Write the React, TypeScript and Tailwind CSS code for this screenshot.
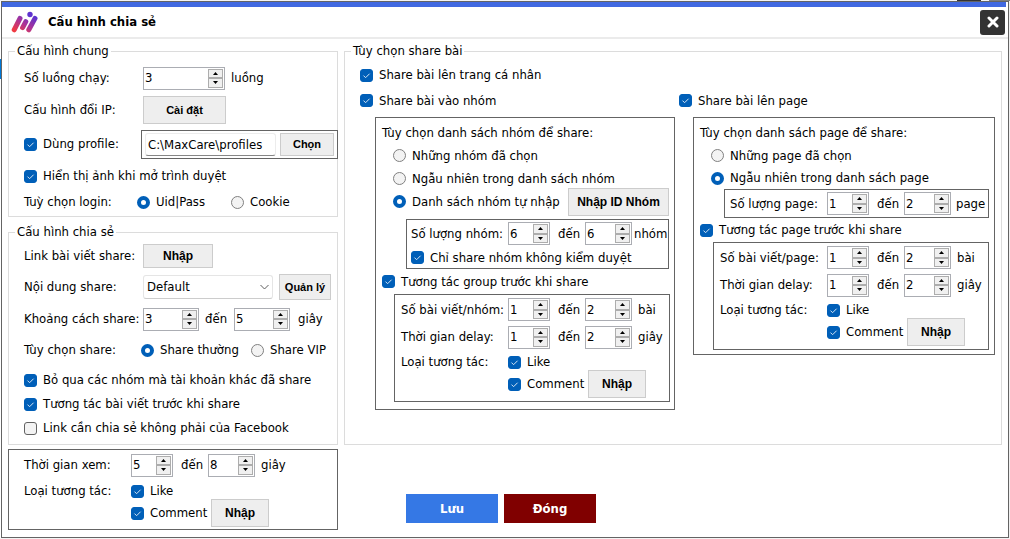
import { useState, type ReactNode } from "react";

function Logo() {
  return (
    <svg className="h-[22px] w-[27px] shrink-0" viewBox="0 0 27 22" aria-hidden="true">
      <defs>
        <linearGradient id="logo-fill" gradientUnits="userSpaceOnUse" x1="6" y1="21" x2="18" y2="2">
          <stop offset="0" stopColor="#f03a42" />
          <stop offset="0.5" stopColor="#a8349a" />
          <stop offset="1" stopColor="#5b33d0" />
        </linearGradient>
      </defs>
      <g stroke="url(#logo-fill)" strokeWidth="5" strokeLinecap="round" fill="none">
        <path d="M3.2 18.8 L9 7.4" />
        <path d="M11.6 16.6 L14.8 10.6" />
        <path d="M17.8 18.8 L24 7.4" />
      </g>
      <circle cx="19" cy="3.5" r="2.7" fill="#5f33cf" />
    </svg>
  );
}

function Check({ label, defaultChecked = true }: { label: string; defaultChecked?: boolean }) {
  return (
    <label className="flex items-center gap-1.5 whitespace-nowrap">
      <span className="grid size-[13px] shrink-0 place-items-center">
        <input
          type="checkbox"
          defaultChecked={defaultChecked}
          className="peer col-start-1 row-start-1 size-[13px] appearance-none rounded-[3px] border border-[#626262] bg-[#f3f3f3] checked:border-[#005fb8] checked:bg-[#005fb8]"
        />
        <svg
          viewBox="0 0 13 13"
          className="pointer-events-none invisible col-start-1 row-start-1 size-[13px] peer-checked:visible"
          aria-hidden="true"
        >
          <path d="M3.5 6.6 L5.6 8.7 L9.6 4.7" fill="none" stroke="#d5e5f4" strokeWidth="1" />
        </svg>
      </span>
      <span>{label}</span>
    </label>
  );
}

function Radio({ name, label, defaultChecked = false }: { name: string; label: string; defaultChecked?: boolean }) {
  return (
    <label className="flex items-center gap-1.5 whitespace-nowrap">
      <input
        type="radio"
        name={name}
        defaultChecked={defaultChecked}
        className="size-[13px] shrink-0 appearance-none rounded-full border border-[#808080] bg-[#f3f3f3] checked:border-4 checked:border-[#005fb8] checked:bg-white"
      />
      <span>{label}</span>
    </label>
  );
}

function Spin({ id, label, value, width }: { id: string; label?: string; value: number; width: string }) {
  const [current, setCurrent] = useState(value);
  const arrow =
    "flex flex-1 items-center justify-center border border-[#adadad] bg-[#f0f0f0] p-0";
  return (
    <span className={`flex h-[23px] shrink-0 border border-[#abadb3] bg-white p-px ${width}`}>
      <input
        id={id}
        type="number"
        aria-label={label}
        value={current}
        onChange={(e) => setCurrent(Number(e.target.value))}
        className="h-[18px] min-w-0 flex-1 appearance-none bg-transparent outline-none [appearance:textfield] [&::-webkit-inner-spin-button]:appearance-none"
      />
      <span className="flex w-[15px] shrink-0 flex-col">
        <button type="button" aria-label="+" className={arrow} onClick={() => setCurrent(current + 1)}>
          <svg viewBox="0 0 5 3" className="h-[3px] w-[5px]" aria-hidden="true">
            <path d="M0 3 L2.5 0 L5 3 Z" />
          </svg>
        </button>
        <button type="button" aria-label="-" className={arrow} onClick={() => setCurrent(current - 1)}>
          <svg viewBox="0 0 5 3" className="h-[3px] w-[5px]" aria-hidden="true">
            <path d="M0 0 L2.5 3 L5 0 Z" />
          </svg>
        </button>
      </span>
    </span>
  );
}

function Button({ children, size, text = "text-[12px]" }: { children: ReactNode; size: string; text?: string }) {
  return (
    <button
      type="button"
      className={`shrink-0 whitespace-nowrap border border-[#cccccc] bg-[#eeeeee] font-['Liberation_Sans',sans-serif] font-bold ${text} ${size}`}
    >
      {children}
    </button>
  );
}

function Range({
  id,
  label,
  labelWidth,
  from,
  to,
  unit,
  unitGap = "pl-1.5",
}: {
  id: string;
  label: string;
  labelWidth: string;
  from: number;
  to: number;
  unit: string;
  unitGap?: string;
}) {
  return (
    <>
      <label htmlFor={id} className={`shrink-0 whitespace-nowrap ${labelWidth}`}>
        {label}
      </label>
      <Spin id={id} value={from} width="w-[42px]" />
      <span className="w-[35px] shrink-0 pl-2">đến</span>
      <Spin id={`${id}-to`} label={`${label} đến`} value={to} width="w-[47px]" />
      <span className={`whitespace-nowrap ${unitGap}`}>{unit}</span>
    </>
  );
}

function Reactions() {
  return (
    <div className="flex">
      <span className="w-[107px] shrink-0 pt-[3px]">Loại tương tác:</span>
      <div>
        <div className="flex h-[22px] items-center">
          <Check label="Like" />
        </div>
        <div className="flex h-[22px] items-center">
          <span className="w-20 shrink-0">
            <Check label="Comment" />
          </span>
          <Button size="h-7 w-[58px]">Nhập</Button>
        </div>
      </div>
    </div>
  );
}

function Interaction({ id, countLabel }: { id: string; countLabel: string }) {
  return (
    <div className="border border-[#646464] pb-1.5 pl-1.5">
      <div className="flex h-[29px] items-center">
        <Range id={`${id}-count`} label={countLabel} labelWidth="w-[107px]" from={1} to={2} unit="bài" />
      </div>
      <div className="mb-px flex h-[26px] items-center">
        <Range id={`${id}-delay`} label="Thời gian delay:" labelWidth="w-[107px]" from={1} to={2} unit="giây" />
      </div>
      <Reactions />
    </div>
  );
}

function Group({ title, className, children }: { title: string; className?: string; children: ReactNode }) {
  return (
    <fieldset className={`min-w-0 border border-[#dcdcdc] pl-[15px] ${className ?? ""}`}>
      <legend className="-ml-[9px] h-4 px-0.5 leading-4">{title}</legend>
      {children}
    </fieldset>
  );
}

function GeneralSettings() {
  return (
    <Group title="Cấu hình chung" className="pb-0.5">
      <div className="flex h-[35px] items-center pt-[3px]">
        <label htmlFor="threads" className="w-[119px]">
          Số luồng chạy:
        </label>
        <Spin id="threads" value={3} width="w-[82px]" />
        <span className="pl-1.5">luồng</span>
      </div>
      <div className="flex h-8 items-center">
        <span className="w-[119px]">Cấu hình đổi IP:</span>
        <Button size="h-7 w-[83px]" text="text-[11px]">
          Cài đặt
        </Button>
      </div>
      <div className="flex h-9 items-center">
        <span className="w-[117px] shrink-0">
          <Check label="Dùng profile:" />
        </span>
        <div className="-mr-px flex h-[29px] min-w-0 flex-1 items-center gap-1 border border-[#646464] px-[3px]">
          <input
            type="text"
            aria-label="Dùng profile"
            defaultValue="C:\MaxCare\profiles"
            className="h-[23px] min-w-0 flex-1 rounded-[3px] border border-[#ececec] border-b-[#868686] bg-white px-0.5 outline-none"
          />
          <Button size="h-[23px] w-[54px]" text="text-[11px]">
            Chọn
          </Button>
        </div>
      </div>
      <div className="flex h-7 items-center">
        <Check label="Hiển thị ảnh khi mở trình duyệt" />
      </div>
      <div className="flex h-6 items-center">
        <span className="w-[113px]">Tuỳ chọn login:</span>
        <span className="w-[94px]">
          <Radio name="login" label="Uid|Pass" defaultChecked />
        </span>
        <Radio name="login" label="Cookie" />
      </div>
    </Group>
  );
}

function ShareSettings() {
  return (
    <Group title="Cấu hình chia sẻ" className="mt-[7px] pb-1">
      <div className="flex h-8 items-center">
        <span className="w-[119px]">Link bài viết share:</span>
        <Button size="h-6 w-[70px]">Nhập</Button>
      </div>
      <div className="flex h-[30px] items-center pr-1.5">
        <label htmlFor="content" className="w-[119px] shrink-0">
          Nội dung share:
        </label>
        <span className="relative mr-1.5 flex-1">
          <select
            id="content"
            className="block h-6 w-full appearance-none rounded-[3px] border border-[#e5e5e5] border-b-[#cccccc] bg-white pl-[3px] outline-none"
          >
            <option>Default</option>
          </select>
          <svg
            viewBox="0 0 9 5"
            className="pointer-events-none absolute top-1/2 right-1 h-[5px] w-[9px] -translate-y-1/2"
            aria-hidden="true"
          >
            <path d="M0.5 0.5 L4.5 4.5 L8.5 0.5" fill="none" stroke="#5f5f5f" />
          </svg>
        </span>
        <Button size="h-[26px] w-[52px]" text="text-[11px]">
          Quản lý
        </Button>
      </div>
      <div className="flex h-[34px] items-center">
        <label htmlFor="gap" className="w-[119px] shrink-0 whitespace-nowrap">
          Khoảng cách share:
        </label>
        <Spin id="gap" value={3} width="w-14" />
        <span className="w-[35px] shrink-0 pl-1.5">đến</span>
        <Spin id="gap-to" label="Khoảng cách share đến" value={5} width="w-14" />
        <span className="pl-2">giây</span>
      </div>
      <div className="flex h-7 items-center">
        <span className="w-[117px] shrink-0">Tùy chọn share:</span>
        <span className="w-[110px] shrink-0">
          <Radio name="share" label="Share thường" defaultChecked />
        </span>
        <Radio name="share" label="Share VIP" />
      </div>
      <div className="pt-1">
        <div className="flex h-6 items-center">
          <Check label="Bỏ qua các nhóm mà tài khoản khác đã share" />
        </div>
        <div className="flex h-6 items-center">
          <Check label="Tương tác bài viết trước khi share" />
        </div>
        <div className="flex h-6 items-center">
          <Check label="Link cần chia sẻ không phải của Facebook" defaultChecked={false} />
        </div>
      </div>
    </Group>
  );
}

function GroupPanel() {
  return (
    <div className="mr-1 ml-[15px] border border-[#646464] pt-1 pb-[7px] pl-1.5">
      <div className="flex h-[22px] items-center">Tùy chọn danh sách nhóm để share:</div>
      <div className="pl-[11px]">
        <div className="flex h-[23px] items-center">
          <Radio name="group" label="Những nhóm đã chọn" />
        </div>
        <div className="flex h-[23px] items-center">
          <Radio name="group" label="Ngẫu nhiên trong danh sách nhóm" />
        </div>
        <div className="flex h-[23px] items-center justify-between pr-[5px]">
          <Radio name="group" label="Danh sách nhóm tự nhập" defaultChecked />
          <Button size="h-7 w-[101px]">Nhập ID Nhóm</Button>
        </div>
      </div>
      <div className="mt-1.5 mr-[5px] ml-6 border border-[#646464] pl-1">
        <div className="flex h-[27px] items-center">
          <Range id="groups" label="Số lượng nhóm:" labelWidth="w-[97px]" from={6} to={6} unit="nhóm" unitGap="pl-0.5" />
        </div>
        <div className="flex h-[21px] items-center">
          <Check label="Chỉ share nhóm không kiểm duyệt" />
        </div>
      </div>
      <div className="flex h-[25px] items-center">
        <Check label="Tương tác group trước khi share" />
      </div>
      <div className="mr-1 ml-3">
        <Interaction id="group" countLabel="Số bài viết/nhóm:" />
      </div>
    </div>
  );
}

function PagePanel() {
  return (
    <div className="mr-1.5 ml-3.5 border border-[#646464] pt-1 pb-1 pl-1.5">
      <div className="flex h-[22px] items-center">Tùy chọn danh sách page để share:</div>
      <div className="pl-[11px]">
        <div className="flex h-[23px] items-center">
          <Radio name="page" label="Những page đã chọn" />
        </div>
        <div className="flex h-[22px] items-center">
          <Radio name="page" label="Ngẫu nhiên trong danh sách page" defaultChecked />
        </div>
      </div>
      <div className="mr-[5px] ml-6 border border-[#646464] pl-[5px]">
        <div className="flex h-[27px] items-center">
          <Range id="pages" label="Số lượng page:" labelWidth="w-[97px]" from={1} to={2} unit="page" unitGap="pl-[5px]" />
        </div>
      </div>
      <div className="flex h-6 items-center">
        <Check label="Tương tác page trước khi share" />
      </div>
      <div className="mr-[5px] ml-[13px]">
        <Interaction id="page" countLabel="Số bài viết/page:" />
      </div>
    </div>
  );
}

export default function App() {
  return (
    <div className="flex min-h-screen flex-col bg-[#f4f4f4] font-['DejaVu_Sans_Condensed','DejaVu_Sans',sans-serif] text-[13px] leading-4 text-black">
      <div className="flex h-px justify-end">
        <div className="w-6 bg-[#333333]" />
        <div className="ml-2 w-[21px] bg-[#808080]" />
      </div>
      <div className="flex flex-1">
        <div className="w-px bg-white pt-[58px]">
          <div className="h-5 bg-[#0078d7]" />
        </div>
        <div className="flex min-w-0 flex-1 flex-col border border-[#646464] bg-white">
          <div className="mr-0.5 h-[5px] bg-[#4169e1]" />
          <header className="flex h-8 items-center justify-between border-b-2 border-[#ebebeb] pr-[3px] pl-[9px]">
            <div className="flex items-center gap-2.5">
              <Logo />
              <h1 className="font-bold">Cấu hình chia sẻ</h1>
            </div>
            <button
              type="button"
              aria-label="Đóng cửa sổ"
              className="flex size-[25px] items-center justify-center rounded-[3px] bg-[#333333]"
            >
              <svg viewBox="0 0 12 12" className="size-3" aria-hidden="true">
                <path d="M2 2 L10 10 M10 2 L2 10" stroke="#ffffff" strokeWidth="3" strokeLinecap="round" />
              </svg>
            </button>
          </header>
          <main className="flex flex-1 gap-1.5 px-1.5 pt-1 pb-[7px]">
            <div className="w-[330px] shrink-0">
              <GeneralSettings />
              <ShareSettings />
              <div className="mt-1 border border-[#646464] pb-[5px] pl-[15px]">
                <div className="flex h-[30px] items-center">
                  <Range id="watch" label="Thời gian xem:" labelWidth="w-[107px]" from={5} to={8} unit="giây" />
                </div>
                <Reactions />
              </div>
            </div>
            <div className="min-w-0 flex-1">
              <Group title="Tùy chọn share bài" className="pb-[34px]">
                <div className="flex h-[29px] items-center pt-[3px]">
                  <Check label="Share bài lên trang cá nhân" />
                </div>
                <div className="grid grid-cols-[319fr_322fr] items-start">
                  <div>
                    <div className="mb-1 flex h-[25px] items-center">
                      <Check label="Share bài vào nhóm" />
                    </div>
                    <GroupPanel />
                  </div>
                  <div>
                    <div className="mb-1 flex h-[25px] items-center">
                      <Check label="Share bài lên page" />
                    </div>
                    <PagePanel />
                  </div>
                </div>
              </Group>
              <div className="mt-[49px] flex gap-1.5 pl-[62px]">
                <button type="button" className="h-[29px] w-[92px] bg-[#3578e5] font-bold text-white">
                  Lưu
                </button>
                <button type="button" className="h-[29px] w-[92px] bg-[#800000] font-bold text-white">
                  Đóng
                </button>
              </div>
            </div>
          </main>
        </div>
        <div className="w-px bg-[#f0f0f0]" />
      </div>
      <div className="h-px" />
    </div>
  );
}
